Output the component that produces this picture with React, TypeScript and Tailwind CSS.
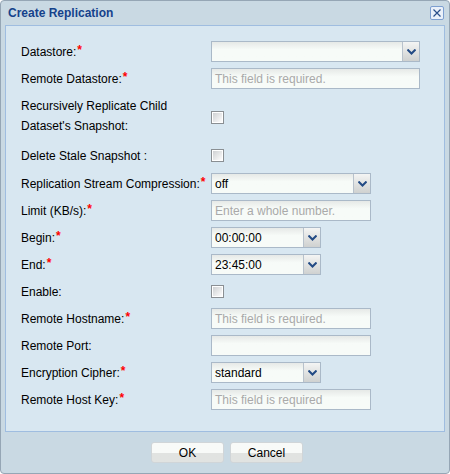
import React from 'react';

type Row =
  | { kind: 'text'; label: string; req?: boolean; width: number; placeholder?: string }
  | { kind: 'combo'; label: string; req?: boolean; width: number; value?: string }
  | { kind: 'check'; label: string; req?: boolean };

const rows: Row[] = [
  { kind: 'combo', label: 'Datastore:', req: true, width: 209 },
  { kind: 'text', label: 'Remote Datastore:', req: true, width: 209, placeholder: 'This field is required.' },
  { kind: 'check', label: 'Delete Stale Snapshot :' },
  { kind: 'combo', label: 'Replication Stream Compression:', req: true, width: 160, value: 'off' },
  { kind: 'text', label: 'Limit (KB/s):', req: true, width: 160, placeholder: 'Enter a whole number.' },
  { kind: 'combo', label: 'Begin:', req: true, width: 110, value: '00:00:00' },
  { kind: 'combo', label: 'End:', req: true, width: 110, value: '23:45:00' },
  { kind: 'check', label: 'Enable:' },
  { kind: 'text', label: 'Remote Hostname:', req: true, width: 160, placeholder: 'This field is required.' },
  { kind: 'text', label: 'Remote Port:', width: 160 },
  { kind: 'combo', label: 'Encryption Cipher:', req: true, width: 110, value: 'standard' },
  { kind: 'text', label: 'Remote Host Key:', req: true, width: 160, placeholder: 'This field is required' },
];

function Label({ text, req }: { text: string; req?: boolean }) {
  return (
    <div className="w-[190px] shrink-0 text-black">
      {text}
      {req && <span className="relative -top-[2px] ml-[1px] font-bold text-[#ff0000]">*</span>}
    </div>
  );
}

function Checkbox() {
  return (
    <div className="h-[13px] w-[13px] border border-[#8a8f93] bg-white p-[1px]">
      <div className="h-full w-full bg-linear-to-br from-[#cfd1d3] to-[#fdfdfd]" />
    </div>
  );
}

function Field({ width, children }: { width: number; children?: React.ReactNode }) {
  return (
    <div
      className="flex h-[21px] items-center border border-[#aab9c8] bg-linear-to-b from-[#e6e9e7] via-[#f7fbf8] via-40% to-[#f7fbf8]"
      style={{ width }}
    >
      {children}
    </div>
  );
}

function Combo({ width, value }: { width: number; value?: string }) {
  return (
    <Field width={width}>
      <div className="flex-1 pl-[3px] text-black">{value}</div>
      <div className="flex h-full w-[17px] items-center justify-center border-l border-[#b8c2cc] bg-linear-to-b from-[#f4f5f4] to-[#cfd1d0]">
        <svg width="9" height="6" viewBox="0 0 9 6">
          <path d="M0.5 0.5 L4.5 4.5 L8.5 0.5" fill="none" stroke="#234b85" strokeWidth="2" />
        </svg>
      </div>
    </Field>
  );
}

function TextField({ width, placeholder }: { width: number; placeholder?: string }) {
  return (
    <Field width={width}>
      <div className="pl-[3px] text-[#a9a9a9]">{placeholder}</div>
    </Field>
  );
}

function FormRow({ row }: { row: Row }) {
  return (
    <div className="mb-[6px] flex h-[21px] items-center">
      <Label text={row.label} req={row.req} />
      {row.kind === 'check' && <Checkbox />}
      {row.kind === 'combo' && <Combo width={row.width} value={row.value} />}
      {row.kind === 'text' && <TextField width={row.width} placeholder={row.placeholder} />}
    </div>
  );
}

function Button({ children }: { children: React.ReactNode }) {
  return (
    <div className="flex h-[21px] w-[73px] items-center justify-center rounded-[3px] border border-[#d0d5d8] bg-linear-to-b from-[#f8faf8] from-50% to-[#e1e3e1] to-50% text-black">
      {children}
    </div>
  );
}

export default function App() {
  return (
    <div className="flex h-[474px] w-[450px] flex-col rounded-[4px] border border-[#95a6b5] bg-[#c9d9e3] font-['Liberation_Sans',Arial,sans-serif] text-[12px]">
      <div className="flex h-[24px] items-center justify-between pl-[7px] pr-[5px]">
        <span className="text-[12px] font-bold text-[#15428b]">Create Replication</span>
        <div className="flex h-[14px] w-[14px] items-center justify-center rounded-[2px] border border-[#7d9fd0] bg-[#eaf1fa]">
          <svg width="8" height="8" viewBox="0 0 8 8">
            <path d="M0.5 0.5 L7.5 7.5 M7.5 0.5 L0.5 7.5" stroke="#2a4f8a" strokeWidth="1.2" />
          </svg>
        </div>
      </div>

      <div className="ml-[4px] w-[440px] border border-[#9fbde0] bg-[#d8e7f1] pb-[15px] pl-[15px] pt-[15px]">
        {rows.slice(0, 2).map((r) => (
          <FormRow key={r.label} row={r} />
        ))}
        <div className="mb-[6px] flex h-[44px] items-start">
          <div className="w-[190px] shrink-0 pt-[1px] leading-[20px] text-black">
            Recursively Replicate Child
            <br />
            Dataset's Snapshot:
          </div>
          <div className="pt-[16px]">
            <Checkbox />
          </div>
        </div>
        {rows.slice(2, 3).map((r) => (
          <div key={r.label} className="mb-[7px] flex h-[21px] items-center">
            <Label text={r.label} />
            <Checkbox />
          </div>
        ))}
        {rows.slice(3).map((r) => (
          <FormRow key={r.label} row={r} />
        ))}
      </div>

      <div className="flex flex-1 justify-center gap-[6px] pl-[4px] pt-[10px]">
        <Button>OK</Button>
        <Button>Cancel</Button>
      </div>
    </div>
  );
}
